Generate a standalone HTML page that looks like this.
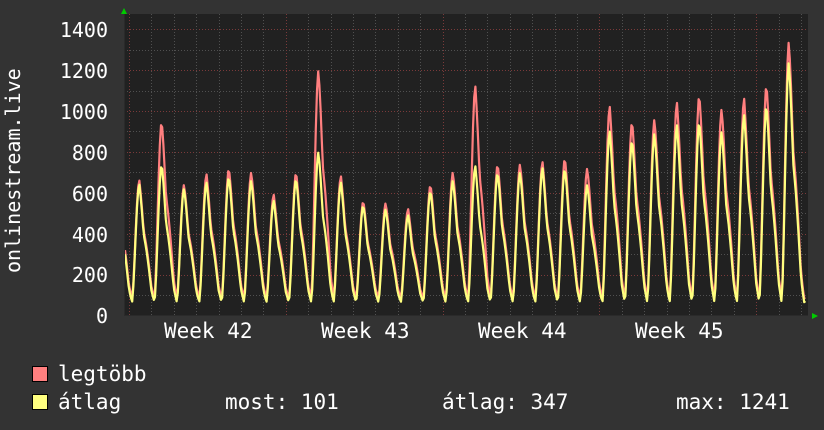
<!DOCTYPE html>
<html><head><meta charset="utf-8"><style>
html,body{margin:0;padding:0;background:#333;}
body{width:824px;height:430px;position:relative;overflow:hidden;font-family:"DejaVu Sans Mono","Liberation Mono",monospace;color:#fff;}
.t{position:absolute;font-size:21px;white-space:pre;line-height:1;}
.yl{position:absolute;right:716px;font-size:20px;line-height:1;}
.sq{position:absolute;left:32px;width:14px;height:14px;border:1px solid #000;}
</style></head><body>
<svg id="g" width="824" height="430" style="position:absolute;left:0;top:0"></svg>
<div class="t" style="font-size:20px;left:0;top:0;transform-origin:0 0;transform:translate(3px,273px) rotate(-90deg);">onlinestream.live</div>
<div class="yl" style="top:20px">1400</div>
<div class="yl" style="top:61px">1200</div>
<div class="yl" style="top:102px">1000</div>
<div class="yl" style="top:143px">800</div>
<div class="yl" style="top:184px">600</div>
<div class="yl" style="top:225px">400</div>
<div class="yl" style="top:265px">200</div>
<div class="yl" style="top:306px">0</div>
<div class="t" style="left:164px;top:321px">Week 42</div>
<div class="t" style="left:321px;top:321px">Week 43</div>
<div class="t" style="left:478px;top:321px">Week 44</div>
<div class="t" style="left:635px;top:321px">Week 45</div>
<div class="sq" style="top:366px;background:#ff7f7f"></div>
<div class="sq" style="top:394px;background:#ffff7f"></div>
<div class="t" style="left:58px;top:364px">legtöbb</div>
<div class="t" style="left:58px;top:392px">átlag</div>
<div class="t" style="left:225px;top:392px">most: 101</div>
<div class="t" style="left:442px;top:392px">átlag: 347</div>
<div class="t" style="left:676px;top:392px">max: 1241</div>
<script>
var s='';
var L=124,R=808,T=14,B=316;
s+='<rect x="'+L+'" y="'+T+'" width="'+(R-L)+'" height="'+(B-T)+'" fill="#212121"/>';
function Y(v){return 315.5-v*0.2045;}
for(var v=100;v<=1400;v+=100){var y=Math.round(Y(v))+0.5;s+='<line x1="'+L+'" x2="'+R+'" y1="'+y+'" y2="'+y+'" stroke="'+(v%200==0?'#7a3a3a':'#505050')+'" stroke-dasharray="1,2"/>';}
for(var k=-1;k<40;k++){var x=129+22.4*k;if(x<L||x>R)continue;var red=(k%7==0);x=Math.round(x)+0.5;s+='<line x1="'+x+'" x2="'+x+'" y1="'+T+'" y2="'+B+'" stroke="'+(red?'#7a3a3a':'#505050')+'" stroke-dasharray="1,2"/>';}
var P=[[700,680],[660,640],[950,740],[640,620],[690,650],[720,680],[700,660],[590,560],[700,670],[1200,800],[680,650],[560,540],[550,520],[520,490],[640,610],[700,660],[1120,730],[740,700],[740,700],[750,720],[770,720],[720,640],[1020,900],[950,860],[960,890],[1040,930],[1080,950],[1010,900],[1060,980],[1130,1030],[1340,1240],[100,100]];
var FU=[[0,1],[0.12,0.85],[0.28,0.58],[0.45,0.46],[0.6,0.32],[0.8,0.1],[1,0]];
function fall(u){for(var i=1;i<FU.length;i++){if(u<=FU[i][0]){var a=FU[i-1],b=FU[i];return a[1]+(b[1]-a[1])*(u-a[0])/(b[0]-a[0]);}}return 0;}
var o=132-22.4;
function val(x,j,base){var d=(x-o)/22.4;var k=Math.floor(d);var t=d-k;var pk=P[k]?P[k][j]:100;var tp=0.33,f;
if(t<tp){f=Math.pow((1-Math.cos(Math.PI*t/tp))/2,0.8);}else{f=fall((t-tp)/(1-tp));}
return base+(pk-base)*f;}
function line(j,base,col){var pts=[];for(var x=L+1;x<=806;x+=1.2){pts.push(x.toFixed(1)+','+Y(val(x,j,base)).toFixed(1));}
return '<polyline points="'+pts.join(' ')+'" fill="none" stroke="'+col+'" stroke-width="2.2" stroke-linejoin="round"/>';}
s+=line(0,85,'#ff7f7f');
s+=line(1,65,'#ffff7f');
s+='<line x1="'+(L+0.5)+'" x2="'+(L+0.5)+'" y1="'+T+'" y2="'+B+'" stroke="#2a2a2a"/>';
s+='<line x1="'+L+'" x2="'+R+'" y1="'+(B-0.5)+'" y2="'+(B-0.5)+'" stroke="#2a2a2a"/>';
s+='<polygon points="121,14 127,14 124,8" fill="#00cc00"/>';
s+='<polygon points="812,313 812,319 818,316" fill="#00cc00"/>';
document.getElementById('g').innerHTML=s;
</script>
</body></html>
